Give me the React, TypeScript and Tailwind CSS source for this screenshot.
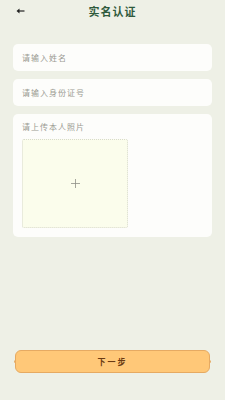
const cjk = { fontFamily: '"Noto Sans CJK SC", "Noto Sans", sans-serif' };

function Field({ placeholder }: { placeholder: string }) {
  return (
    <div className="h-[27px] rounded-[5px] bg-[#fdfdfb] flex items-center px-[9px]">
      <span className="text-[8px] text-[#9a9a92] tracking-[1px]">{placeholder}</span>
    </div>
  );
}

export default function App() {
  return (
    <div className="w-[225px] h-[400px] bg-[#eef0e6] flex flex-col" style={cjk}>
      <div className="relative h-[23px] flex items-center justify-center">
        <svg className="absolute left-[16px] top-[8px]" width="9" height="6" viewBox="0 0 9 6">
          <path d="M0.5 3 L3.5 0.5 L3.5 5.5 Z" fill="#222" />
          <path d="M3 3 H8.5" stroke="#222" strokeWidth="1.2" />
        </svg>
        <span className="text-[11px] font-bold text-[#2f5a3c] tracking-[1px]">实名认证</span>
      </div>

      <div className="flex flex-col gap-[8px] px-[13px] mt-[21px]">
        <Field placeholder="请输入姓名" />
        <Field placeholder="请输入身份证号" />
        <div className="h-[123px] rounded-[5px] bg-[#fdfdfb] px-[9px] pt-[8px]">
          <div className="text-[8px] text-[#9a9a92] tracking-[1px] leading-[10px]">请上传本人照片</div>
          <div className="mt-[7px] w-[106px] h-[89px] bg-[#fbfdec] border border-dotted border-[#d8dacc] rounded-[2px] flex items-center justify-center">
            <svg width="9" height="9" viewBox="0 0 9 9">
              <path d="M4.5 0 V9 M0 4.5 H9" stroke="#8f8f88" strokeWidth="0.8" />
            </svg>
          </div>
        </div>
      </div>

      <div className="flex-1" />

      <div className="px-[15px] mb-[27px]">
        <div className="relative h-[23px] rounded-[6px] bg-[#ffc878] border border-[#e6aa62] flex items-center justify-center">
          <span className="absolute left-[-2px] top-[9px] w-[2px] h-[3px] bg-[#e6aa62] rounded-l-full" />
          <span className="absolute right-[-2px] top-[9px] w-[2px] h-[3px] bg-[#e6aa62] rounded-r-full" />
          <span className="text-[8px] font-bold text-[#6a3a12] tracking-[2px]">下一步</span>
        </div>
      </div>
    </div>
  );
}
